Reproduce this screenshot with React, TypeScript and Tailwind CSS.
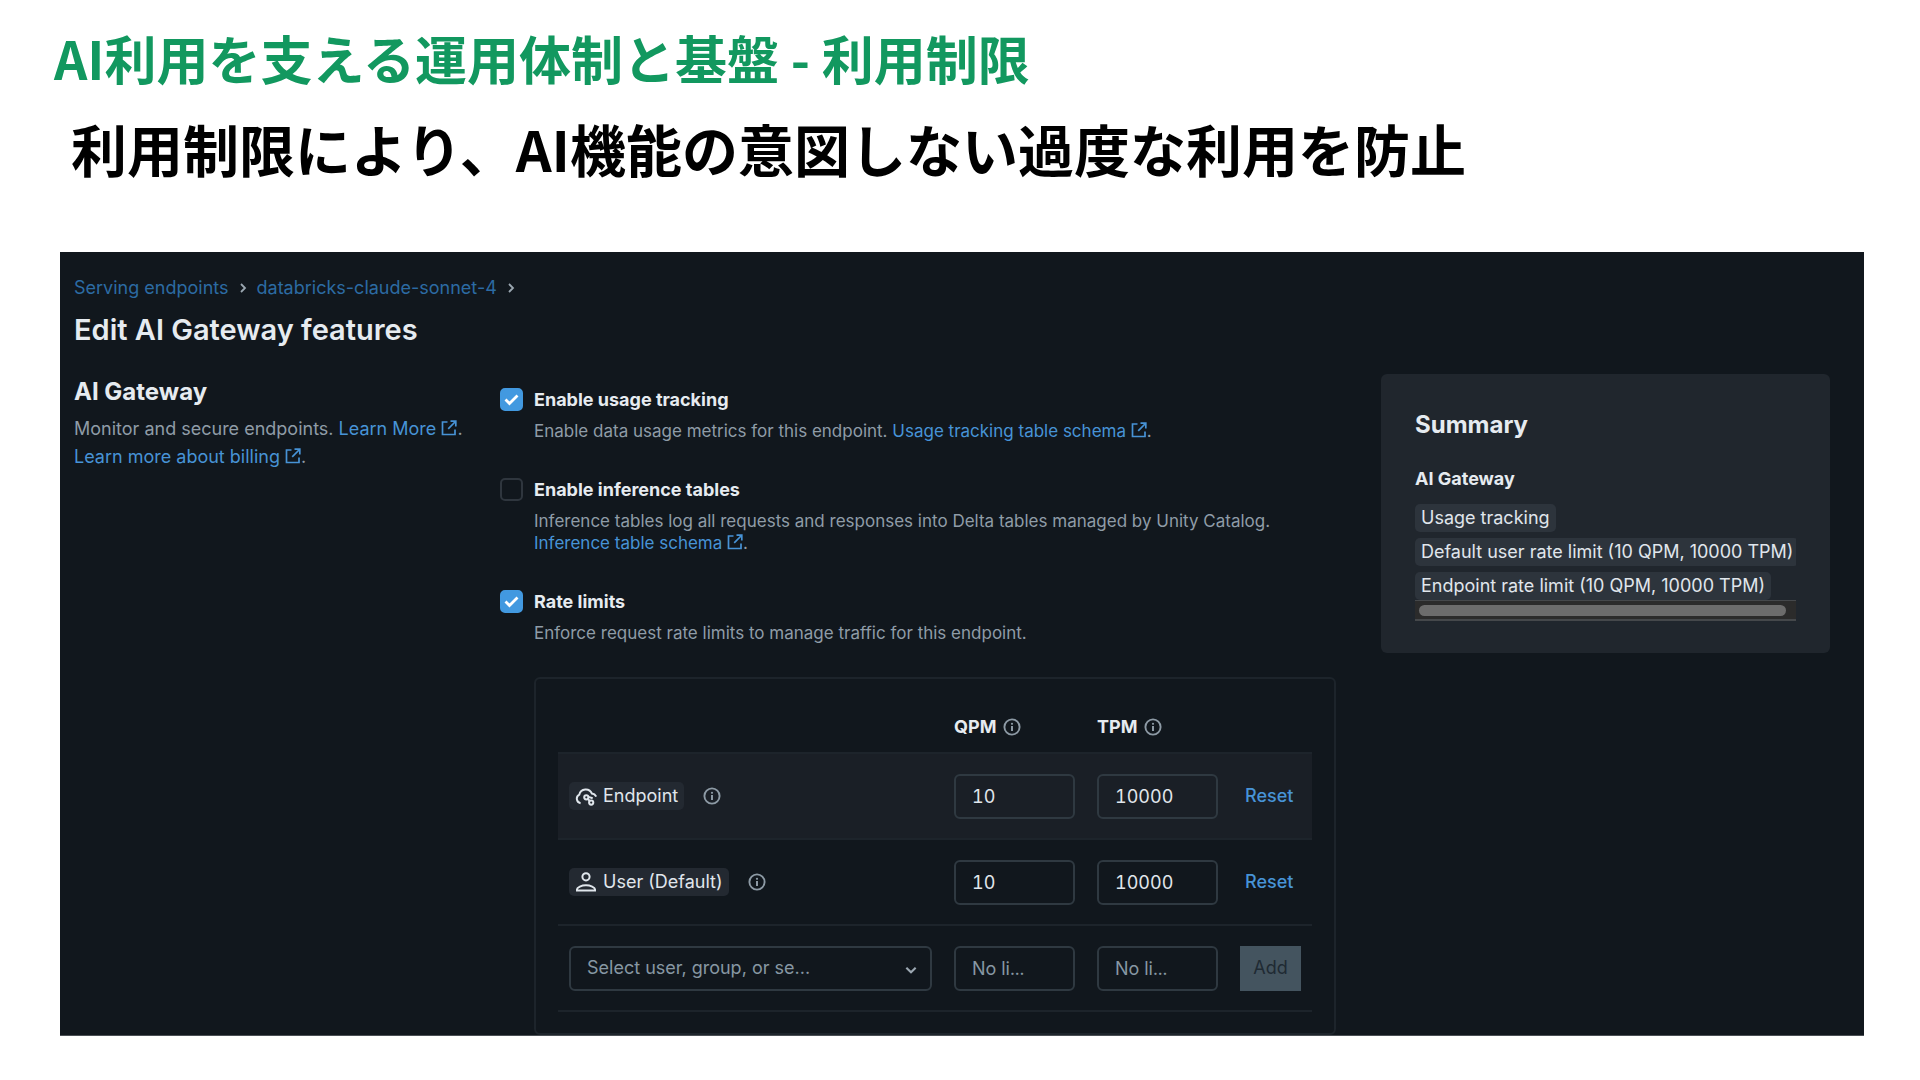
import React, { useState } from "react";

interface FeatureProps {
  id: string;
  title: string;
  defaultChecked?: boolean;
  children: React.ReactNode;
}

const ExternalIcon = () => (
  <svg
    viewBox="0 0 16 16"
    className="inline-block size-4 align-[-1px]"
    fill="none"
    stroke="currentColor"
    strokeWidth="1.7"
    aria-hidden="true"
  >
    <path d="M6.5 2H1.5v12.5H14V9.5" />
    <path d="M9.5 1.2h5.3v5.3M14.5 1.5 7.2 8.8" />
  </svg>
);

const InfoIcon = () => (
  <svg viewBox="0 0 18 18" className="size-[18px] text-[#8d9aa5]" fill="none" aria-hidden="true">
    <circle cx="9" cy="9" r="7.6" stroke="currentColor" strokeWidth="1.9" />
    <path d="M9 8v5" stroke="currentColor" strokeWidth="2" />
    <circle cx="9" cy="5.8" r="1.1" fill="currentColor" />
  </svg>
);

const EndpointIcon = () => (
  <svg viewBox="0 0 22 20" className="h-5 w-[22px]" fill="none" stroke="currentColor" strokeWidth="2" aria-hidden="true">
    <path d="M5.6 17.2A4.6 4.6 0 0 1 4.3 8.600 A6.600 6.600 0 0 1 16.900 7.600 Q19.900 8 21.200 10.600" />
    <circle cx="11.300" cy="11.300" r="2.100" />
    <circle cx="16.200" cy="16.600" r="2.100" />
    <path d="m12.800 12.900 1.900 2.100M13.400 10.900l4.300 1.300" />
  </svg>
);

const UserIcon = () => (
  <svg viewBox="0 0 22 20" className="h-5 w-[22px]" fill="none" stroke="currentColor" strokeWidth="2" aria-hidden="true">
    <circle cx="11" cy="4.8" r="3.6" />
    <path d="M2 18.6v-1.3c0-2 4.5-4 9-4s9 2 9 4v1.3Z" />
  </svg>
);

const Chevron = ({ className }: { className: string }) => (
  <svg viewBox="0 0 12 12" className={className} fill="none" stroke="currentColor" strokeWidth="1.8" aria-hidden="true">
    <path d="M4 2l4 4-4 4" />
  </svg>
);

const ExtLink = ({ children }: { children: React.ReactNode }) => (
  <a href="#" className="whitespace-nowrap text-[#4793d6]">
    {children} <ExternalIcon />
  </a>
);

const Feature = ({ id, title, defaultChecked = false, children }: FeatureProps) => {
  const [checked, setChecked] = useState(defaultChecked);

  return (
    <div className="flex gap-[11px]">
      <div className="relative size-[23px] shrink-0">
        <input
          id={id}
          type="checkbox"
          checked={checked}
          onChange={(e) => setChecked(e.target.checked)}
          className="block size-[23px] appearance-none rounded-[5px] border-2 border-[#2f363e] checked:border-[#4299e0] checked:bg-[#4299e0]"
        />
        {checked && (
          <svg
            viewBox="0 0 23 23"
            className="pointer-events-none absolute inset-0 size-[23px] text-white"
            fill="none"
            stroke="currentColor"
            strokeWidth="2.8"
            aria-hidden="true"
          >
            <path d="m5.5 11.5 4 4 8-8" />
          </svg>
        )}
      </div>
      <div>
        <label htmlFor={id} className="block text-lg leading-6 font-bold text-[#e6ebf0]">
          {title}
        </label>
        <p className="mt-2 text-[17px] leading-[22px] text-[#8f9ca7]">{children}</p>
      </div>
    </div>
  );
};

const tagClass = "rounded-[5px] px-1.5 text-lg leading-7 whitespace-nowrap text-[#e0e6ec]";
const fieldClass =
  "block h-[45px] w-full rounded-md border-2 border-[#2f3941] bg-transparent px-4 text-lg tabular-nums text-[#e0e6ec] text-ellipsis placeholder:text-[#8797a3]";

const rows = [
  { name: "Endpoint", icon: <EndpointIcon />, qpm: "10", tpm: "10000", row: "bg-[#1a1f26]" },
  { name: "User (Default)", icon: <UserIcon />, qpm: "10", tpm: "10000", row: "" },
];

const RateLimits = () => (
  <div className="mt-[33px] ml-[34px] rounded-md border-2 border-[#1d242b] px-[22px] pt-[22px] pb-[21px]">
    <table className="w-full table-fixed border-collapse text-left">
      <colgroup>
        <col />
        <col className="w-[143px]" />
        <col className="w-[143px]" />
        <col className="w-[83px]" />
      </colgroup>
      <thead>
        <tr className="h-[52px] border-b-2 border-[#1d242b] text-lg text-[#e6ebf0]">
          <td />
          {["QPM", "TPM"].map((h) => (
            <th key={h} scope="col" className="px-[11px] font-bold">
              <span className="flex items-center gap-[7px]">
                {h} <InfoIcon />
              </span>
            </th>
          ))}
          <td />
        </tr>
      </thead>
      <tbody>
        {rows.map((r) => (
          <tr key={r.name} className={`h-[86px] border-b-2 border-[#1d242b] ${r.row}`}>
            <td className="px-[11px]">
              <div className="flex items-center gap-[19px]">
                <span className={`flex items-center gap-1.5 bg-[#232931] ${tagClass}`}>
                  {r.icon}
                  {r.name}
                </span>
                <InfoIcon />
              </div>
            </td>
            <td className="px-[11px]">
              <input aria-label={`${r.name} QPM`} defaultValue={r.qpm} className={fieldClass} />
            </td>
            <td className="px-[11px]">
              <input aria-label={`${r.name} TPM`} defaultValue={r.tpm} className={fieldClass} />
            </td>
            <td className="px-4">
              <button type="button" className="text-lg font-medium text-[#4793d6]">
                Reset
              </button>
            </td>
          </tr>
        ))}
        <tr className="h-[86px] border-b-2 border-[#1d242b]">
          <td className="px-[11px]">
            <div className="relative">
              <select
                aria-label="User, group, or service principal"
                className="block h-[45px] w-full appearance-none rounded-md border-2 border-[#2f3941] bg-[#11171d] px-4 text-lg text-[#8797a3]"
              >
                <option>Select user, group, or se...</option>
              </select>
              <Chevron className="pointer-events-none absolute top-[17px] right-3.5 size-3.5 rotate-90 text-[#9ba7b1]" />
            </div>
          </td>
          <td className="px-[11px]">
            <input aria-label="New QPM" placeholder="No li..." className={fieldClass} />
          </td>
          <td className="px-[11px]">
            <input aria-label="New TPM" placeholder="No li..." className={fieldClass} />
          </td>
          <td className="px-[11px]">
            <button type="button" disabled className="block h-[45px] w-full bg-[#44545f] text-lg text-[#1f2a33]">
              Add
            </button>
          </td>
        </tr>
      </tbody>
    </table>
  </div>
);

const Summary = () => (
  <aside className="w-[449px] shrink-0 self-start rounded-md bg-[#20262d] px-[34px] pt-[35px] pb-8">
    <h2 className="text-2xl leading-8 font-bold text-[#e6ebf0]">Summary</h2>
    <h3 className="mt-6 text-lg leading-7 font-bold text-[#e6ebf0]">AI Gateway</h3>
    <div className="mt-[11px] overflow-hidden">
      <ul className="flex flex-col items-start gap-1.5">
        {["Usage tracking", "Default user rate limit (10 QPM, 10000 TPM)", "Endpoint rate limit (10 QPM, 10000 TPM)"].map(
          (tag) => (
            <li key={tag} className={`bg-[#2d343c] ${tagClass}`}>
              {tag}
            </li>
          )
        )}
      </ul>
      <div className="flex h-[21px] items-center border-t border-b-2 border-[#45484b] bg-[#2b2b2b] pr-2.5 pl-1">
        <div className="h-[11px] w-full rounded-full bg-[#6c6c6c]" />
      </div>
    </div>
  </aside>
);

export default function App() {
  return (
    <div className="min-h-screen bg-white pt-[30px] pb-11 font-['Inter',sans-serif]">
      <header className="px-[54px] font-['Noto_Sans_CJK_JP',sans-serif] font-bold">
        <h1 className="text-[52px] leading-[56px] text-[#12985f]">AI利用を支える運用体制と基盤 - 利用制限</h1>
        <p className="mt-[30px] ml-[17px] text-[56px] leading-[64px] text-black">
          利用制限により、AI機能の意図しない過度な利用を防止
        </p>
      </header>

      <div className="mt-[72px] mr-14 ml-[60px] border-b border-[#4a4f54] bg-[#11171d] pt-[22px] pr-[34px] pl-3.5">
        <nav aria-label="Breadcrumb" className="flex items-center gap-2 text-lg leading-7">
          <a href="#" className="text-[#2c6ba3]">
            Serving endpoints
          </a>
          <Chevron className="size-3 text-[#9ba7b1]" />
          <a href="#" className="text-[#2c6ba3]">
            databricks-claude-sonnet-4
          </a>
          <Chevron className="size-3 text-[#9ba7b1]" />
        </nav>
        <h2 className="mt-2 text-[29px] leading-10 font-semibold text-[#e6ebf0]">Edit AI Gateway features</h2>

        <div className="mt-6 flex">
          <section className="mr-[30px] w-[396px] shrink-0 pt-0.5">
            <h3 className="text-2xl leading-8 font-bold text-[#e6ebf0]">AI Gateway</h3>
            <p className="mt-[7px] text-lg leading-7 text-[#8f9ca7]">
              Monitor and secure endpoints. <ExtLink>Learn More</ExtLink>.{" "}
              <ExtLink>Learn more about billing</ExtLink>.
            </p>
          </section>

          <main className="min-w-0 flex-1 pt-3.5">
            <div className="flex flex-col gap-9">
              <Feature id="usage" title="Enable usage tracking" defaultChecked>
                Enable data usage metrics for this endpoint. <ExtLink>Usage tracking table schema</ExtLink>.
              </Feature>
              <Feature id="inference" title="Enable inference tables">
                Inference tables log all requests and responses into Delta tables managed by Unity Catalog.{" "}
                <ExtLink>Inference table schema</ExtLink>.
              </Feature>
              <Feature id="rate" title="Rate limits" defaultChecked>
                Enforce request rate limits to manage traffic for this endpoint.
              </Feature>
            </div>
            <RateLimits />
          </main>

          <div className="ml-[45px] flex">
            <Summary />
          </div>
        </div>
      </div>
    </div>
  );
}
